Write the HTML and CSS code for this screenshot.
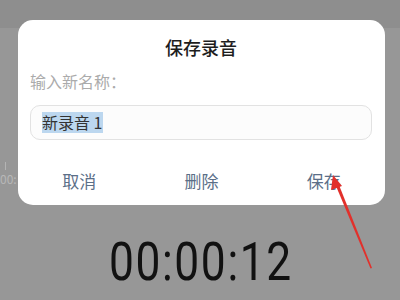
FILE: index.html
```html
<!DOCTYPE html>
<html lang="zh-CN">
<head>
    <meta charset="UTF-8">
    <meta name="viewport" content="width=device-width, initial-scale=1.0">
    <title>保存录音</title>
    <link rel="stylesheet" href="styles.css">
</head>
<body>
    <div class="screen">
        <!-- faint timeline behind the dialog -->
        <div class="timeline">
            <span class="tick"></span>
            <span class="tick-label">00:</span>
        </div>

        <div class="dialog">
            <h2 class="dialog-title">保存录音</h2>
            <label class="field-label" for="recName">输入新名称：</label>
            <div class="field">
                <span class="selected">新录音 1</span>
            </div>
            <div class="actions">
                <button class="action">取消</button>
                <button class="action">删除</button>
                <button class="action">保存</button>
            </div>
        </div>

        <div class="timer"><span class="timer-text">00:00:12</span></div>

        <svg class="arrow" width="400" height="300" viewBox="0 0 400 300">
            <polygon points="372,268 370.5,268.5 336,186 339,185" fill="#e2302b"/>
            <polygon points="333,175 331,190 342,186" fill="#e2302b"/>
        </svg>
    </div>
</body>
</html>
```

FILE: styles.css
```css
body {
    margin: 0;
    font-family: "Noto Sans CJK SC", "Noto Sans", sans-serif;
    background-color: #989898;
}

.screen {
    position: relative;
    width: 400px;
    height: 300px;
    overflow: hidden;
    background: linear-gradient(#8e8e8e 0, #8e8e8e 28px, #979797 28px);
    padding-top: 20px;
    box-sizing: border-box;
}

.timeline {
    position: absolute;
    left: 0;
    top: 162px;
    width: 30px;
    height: 30px;
}

.tick {
    position: absolute;
    left: 5px;
    top: 0;
    width: 1px;
    height: 8px;
    background-color: #b4b4b4;
}

.tick-label {
    position: absolute;
    left: 0;
    top: 10px;
    font-size: 12px;
    line-height: 14px;
    color: #b8b8b8;
}

.dialog {
    margin-left: 18px;
    width: 367px;
    height: 185px;
    background-color: #fff;
    border-radius: 15px;
    padding: 0 13px 0 12px;
    box-sizing: border-box;
    display: flex;
    flex-direction: column;
}

.dialog-title {
    margin: 0;
    padding-top: 16px;
    text-align: center;
    font-size: 18px;
    line-height: 22px;
    font-weight: 500;
    color: #1e1e1e;
}

.field-label {
    margin-top: 13px;
    font-size: 16px;
    line-height: 20px;
    color: #ababab;
}

.field {
    margin-top: 14px;
    height: 35px;
    border: 1px solid #e2e2e2;
    border-radius: 10px;
    background-color: #fcfcfc;
    box-sizing: border-box;
    padding-left: 11px;
    display: flex;
    align-items: center;
}

.selected {
    font-size: 16px;
    line-height: 21px;
    color: #333;
    background-color: #bcd7ef;
    padding-right: 1px;
}

.actions {
    display: flex;
    margin: 30px -13px 0 -12px;
}

.action {
    flex: 1;
    border: none;
    background: none;
    padding: 0;
    font-family: inherit;
    font-size: 17px;
    line-height: 22px;
    color: #5b6f88;
}

.timer {
    margin-top: 28px;
    text-align: center;
    font-family: Roboto, sans-serif;
    font-size: 54px;
    line-height: 58px;
    color: #111;
}

/* condensed, DIN-like digits */
.timer-text {
    display: inline-block;
    letter-spacing: 2px;
    transform: scaleX(0.82);
    padding-left: 3px;
}

.arrow {
    position: absolute;
    left: 0;
    top: 0;
}
```
